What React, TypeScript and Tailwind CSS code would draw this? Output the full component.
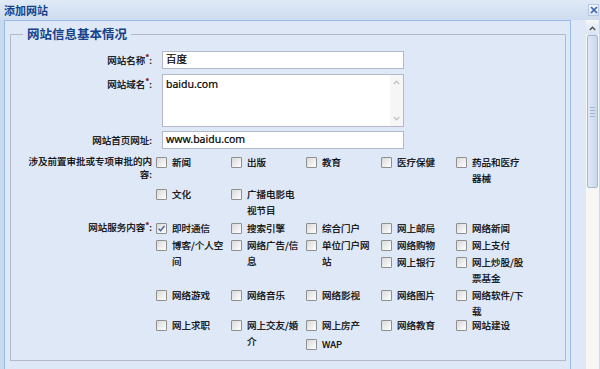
import React from 'react';

type Row = { h: string; items: (string | null)[] };

const approvalRows: Row[] = [
  { h: 'h-[32px]', items: ['新闻', '出版', '教育', '医疗保健', '药品和医疗器械'] },
  { h: 'h-[34px]', items: ['文化', '广播电影电视节目'] },
];

const serviceRows: Row[] = [
  { h: 'h-[17px]', items: ['即时通信', '搜索引擎', '综合门户', '网上邮局', '网络新闻'] },
  { h: 'h-[17px]', items: ['博客/个人空间', '网络广告/信息', '单位门户网站', '网络购物', '网上支付'] },
  { h: 'h-[33px]', items: [null, null, null, '网上银行', '网上炒股/股票基金'] },
  { h: 'h-[30px]', items: ['网络游戏', '网络音乐', '网络影视', '网络图片', '网络软件/下载'] },
  { h: 'h-[19px]', items: ['网上求职', '网上交友/婚介', '网上房产', '网络教育', '网站建设'] },
  { h: 'h-[16px]', items: [null, null, 'WAP'] },
];

const checked = ['即时通信'];

function Req() {
  return <span className="align-top text-[9px] leading-[9px] text-[#e60012]">*</span>;
}

function Check({ on = false }: { on?: boolean }) {
  return (
    <span className="mt-[3px] flex h-[11px] w-[11px] shrink-0 items-center justify-center rounded-[1px] border border-[#8e8f8f] bg-gradient-to-br from-[#d9d9d9] to-white">
      {on && (
        <svg width="9" height="9" viewBox="0 0 9 9">
          <path d="M1.6 4.6 L3.6 6.8 L7.4 2" fill="none" stroke="#3b5a94" strokeWidth="1.3" />
        </svg>
      )}
    </span>
  );
}

function Option({ label }: { label: string | null }) {
  if (!label) return <div className="w-[75px] shrink-0" />;
  return (
    <div className="flex w-[75px] shrink-0 items-start gap-[5px]">
      <Check on={checked.includes(label)} />
      <span className="w-[55px] leading-[16px]">{label}</span>
    </div>
  );
}

function Group({ label, required, rows }: { label: string; required?: boolean; rows: Row[] }) {
  return (
    <div className="flex">
      <div className="w-[130px] shrink-0 pt-px text-right leading-[13px]">
        {required ? (
          <>
            {label}
            <Req />:
          </>
        ) : (
          `${label}:`
        )}
      </div>
      <div className="ml-[4px]">
        {rows.map((r, i) => (
          <div key={i} className={`flex ${r.h}`}>
            {r.items.map((it, j) => (
              <Option key={j} label={it} />
            ))}
          </div>
        ))}
      </div>
    </div>
  );
}

function Field({ value }: { value: string }) {
  return (
    <div className="ml-[10px] flex h-[18px] w-[242px] items-center border border-[#b5b8c8] bg-white pl-[3px] font-['Noto_Sans','Noto_Sans_CJK_SC',sans-serif] text-[10.5px]">
      {value}
    </div>
  );
}

function Chevron({ up, color }: { up?: boolean; color: string }) {
  return (
    <svg width="7" height="5" viewBox="0 0 7 5">
      <path d={up ? 'M0.8 4 L3.5 1.2 L6.2 4' : 'M0.8 1 L3.5 3.8 L6.2 1'} fill="none" stroke={color} strokeWidth="1.3" />
    </svg>
  );
}

export default function App() {
  return (
    <div className="flex h-[369px] w-[600px] flex-col overflow-hidden bg-[#dfe8f6] font-['Noto_Sans_CJK_SC','Liberation_Sans',sans-serif] text-[9.5px] text-black [-webkit-text-stroke:0.2px_#000]">
      {/* window header */}
      <div className="flex h-[20px] shrink-0 items-center justify-between bg-gradient-to-b from-[#e0eaf7] to-[#cddcef] pl-[4px] pr-px">
        <span className="text-[11px] font-bold text-[#15428b] [-webkit-text-stroke:0]">添加网站</span>
        <span className="flex h-[12px] w-[11px] items-center justify-center border border-[#b4c8e4] bg-gradient-to-b from-[#f4f8fd] to-[#dbe6f4]">
          <svg width="8" height="8" viewBox="0 0 8 8">
            <path d="M1 1 L7 7 M7 1 L1 7" stroke="#3d62b0" strokeWidth="1.7" />
          </svg>
        </span>
      </div>

      <div className="flex min-h-0 flex-1">
        <div className="w-[4px] shrink-0 bg-[#c9d9ee]" />

        {/* panel */}
        <div className="w-[567px] shrink-0 border-x border-t border-[#99bbe8] pl-[5px] pr-[4px] pt-[4px]">
          <fieldset className="border border-[#b5b8c8] px-[11px] pb-[8px] pt-[8px]">
            <legend className="ml-px px-[4px] text-[12.5px] font-bold leading-[18px] text-[#15428b] [-webkit-text-stroke:0]">
              网站信息基本情况
            </legend>

            <div className="flex items-center">
              <div className="w-[130px] text-right">
                网站名称<Req />:
              </div>
              <Field value="百度" />
            </div>

            <div className="mt-[5px] flex items-start">
              <div className="w-[130px] pt-[3px] text-right">
                网站域名<Req />:
              </div>
              <div className="ml-[10px] flex h-[53px] w-[242px] border border-[#b5b8c8] bg-white">
                <div className="flex-1 pl-[3px] pt-[2px] font-['Noto_Sans','Noto_Sans_CJK_SC',sans-serif] text-[10.5px]">baidu.com</div>
                <div className="flex w-[13px] flex-col items-center justify-between bg-[#f6f6f6] py-[5px]">
                  <Chevron up color="#c4c4c4" />
                  <Chevron color="#c4c4c4" />
                </div>
              </div>
            </div>

            <div className="mt-[4px] flex items-center">
              <div className="w-[130px] text-right">网站首页网址:</div>
              <Field value="www.baidu.com" />
            </div>

            <div className="mt-[5px]">
              <Group label="涉及前置审批或专项审批的内容" rows={approvalRows} />
            </div>
            <Group label="网站服务内容" required rows={serviceRows} />
          </fieldset>
        </div>

        <div className="flex-1" />

        {/* scrollbar */}
        <div className="flex w-[14px] shrink-0 flex-col border-r border-[#c9d9ee] bg-[#f8f7f4] pt-[2px]">
          <div className="flex h-[13px] items-center justify-center rounded-[2px] bg-gradient-to-b from-[#eef3fa] to-[#d9e4f2]">
            <Chevron up color="#4a4a4a" />
          </div>
          <div className="mx-px flex h-[153px] items-center justify-center rounded-[2px] border border-[#a3b8d6] bg-gradient-to-r from-[#dfe8f5] to-[#c9d8ec]">
            <div className="flex flex-col gap-[2px]">
              <span className="h-px w-[5px] bg-[#9fb3d0]" />
              <span className="h-px w-[5px] bg-[#9fb3d0]" />
              <span className="h-px w-[5px] bg-[#9fb3d0]" />
              <span className="h-px w-[5px] bg-[#9fb3d0]" />
            </div>
          </div>
          <div className="flex-1" />
        </div>
      </div>
    </div>
  );
}
